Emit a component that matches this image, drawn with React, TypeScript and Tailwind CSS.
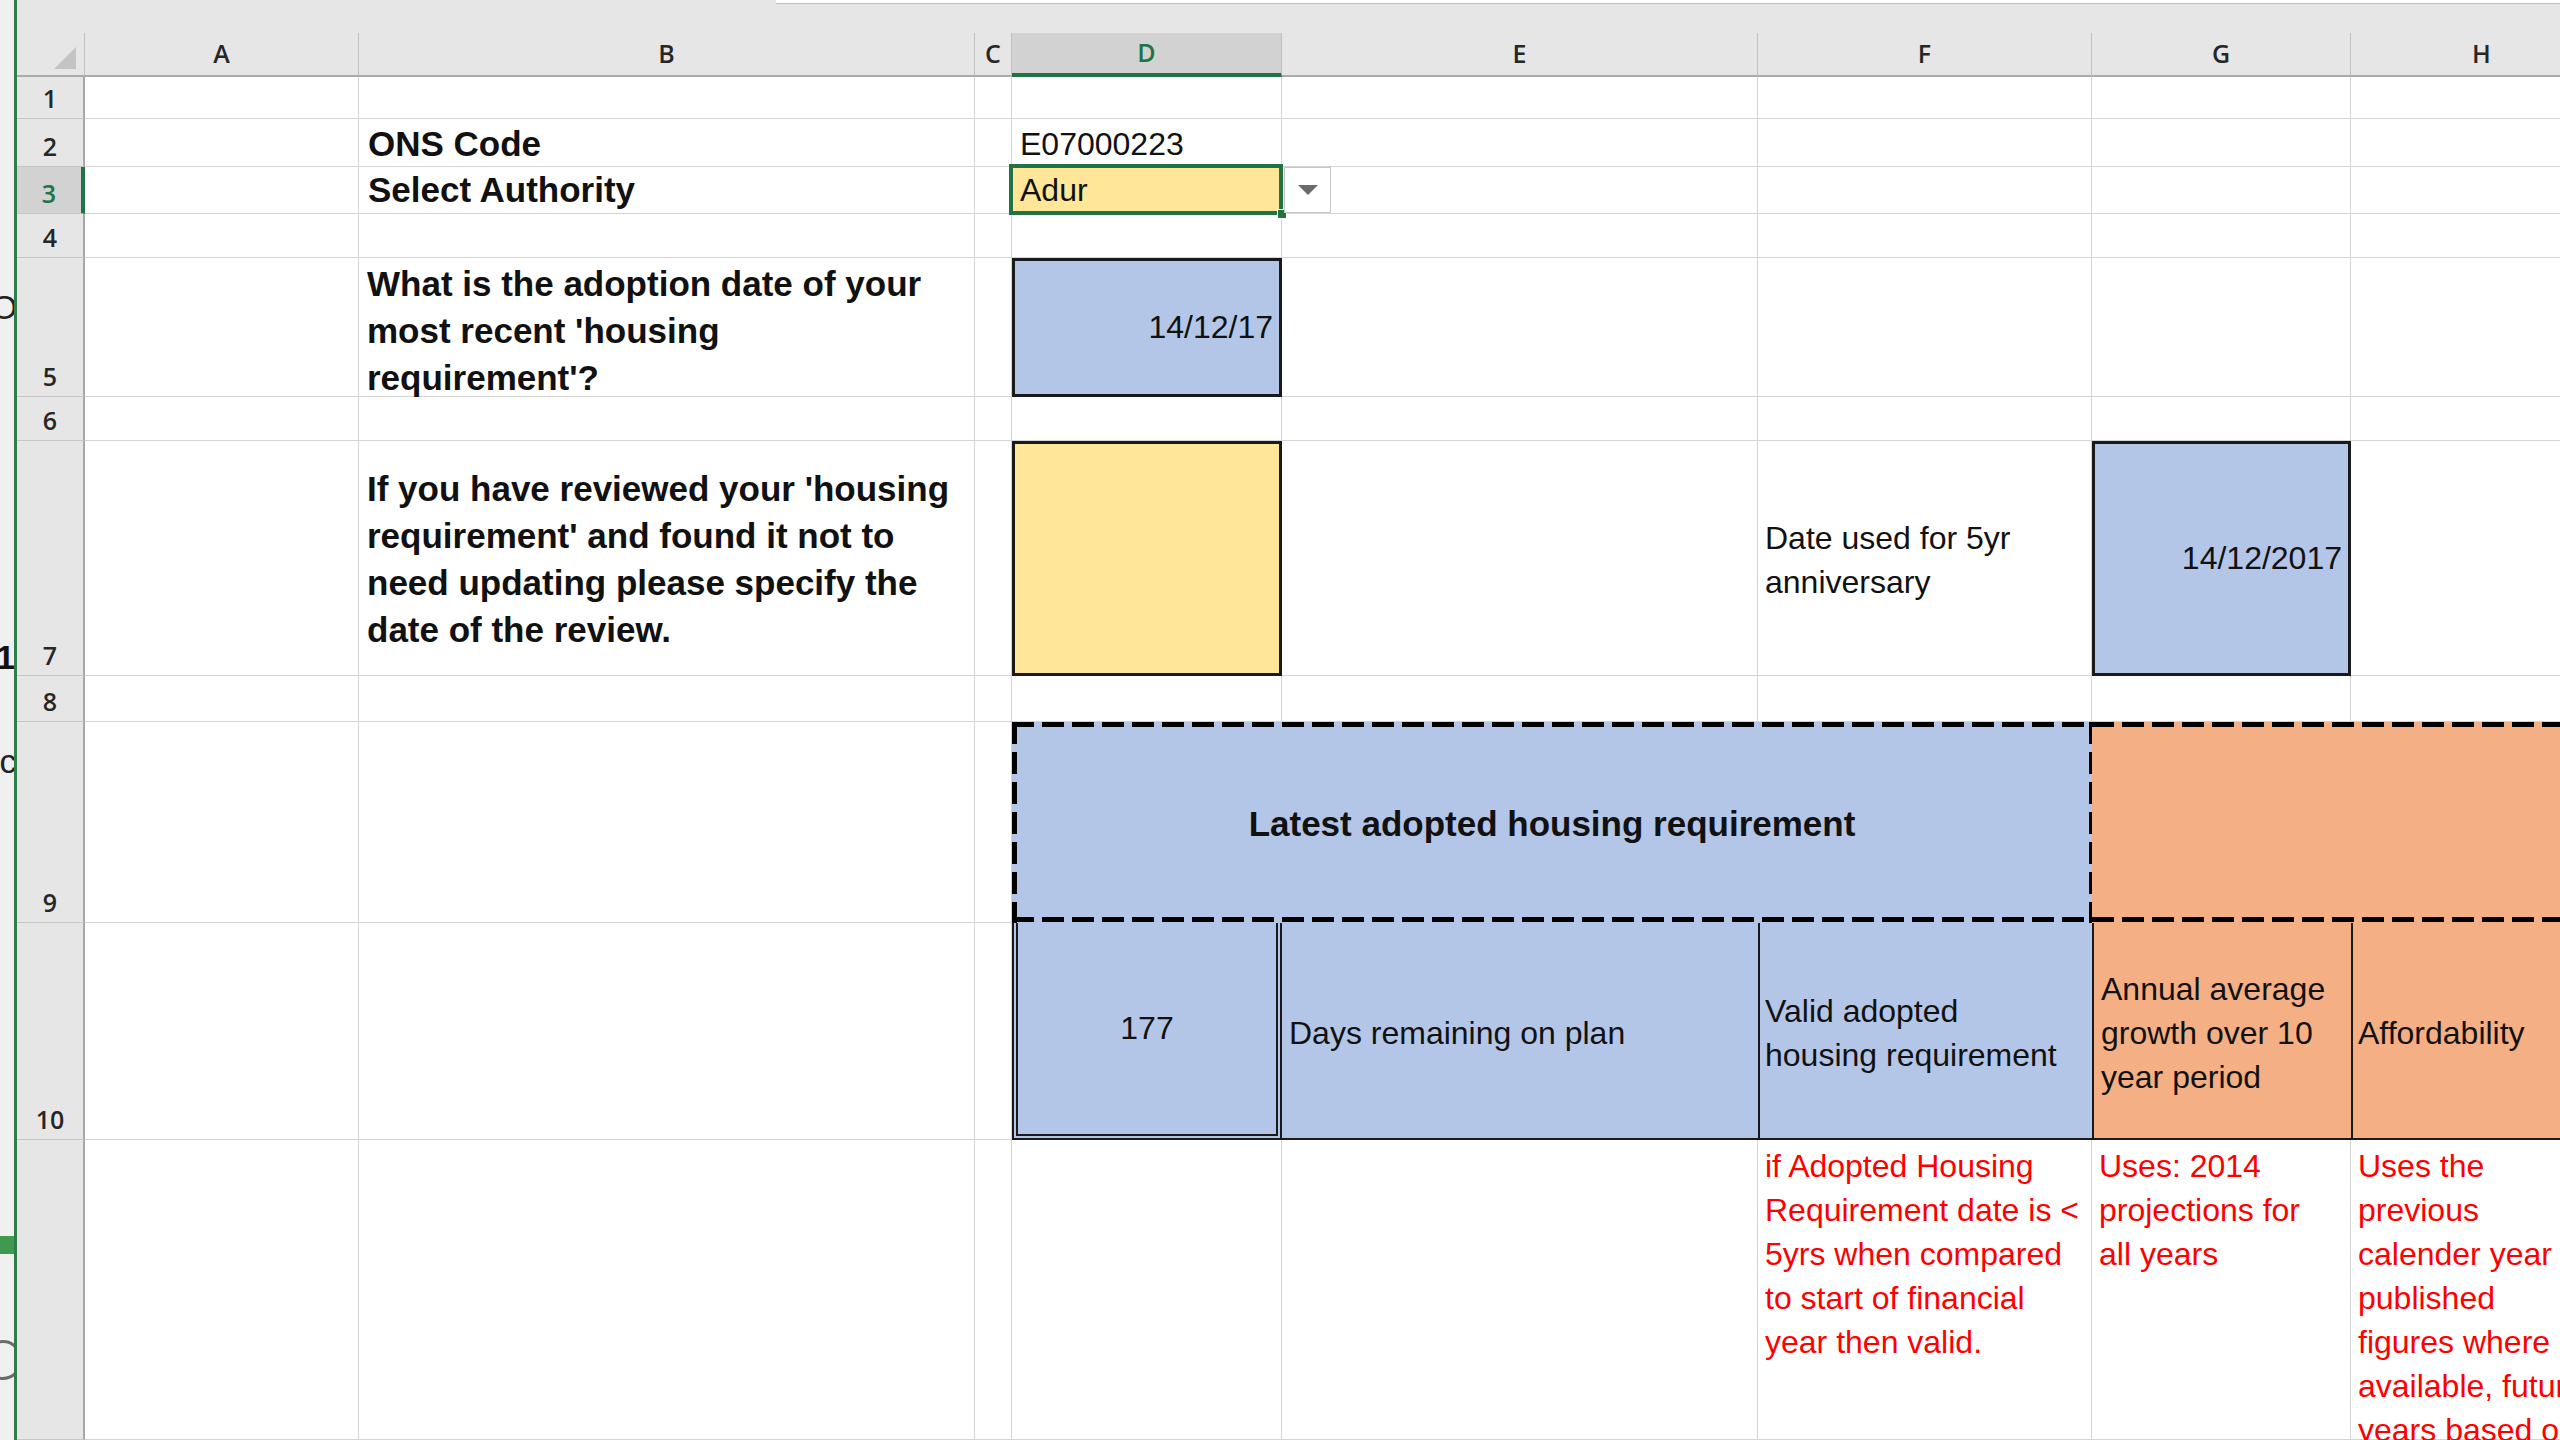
import React from "react";

const g = "border-r border-b border-[#d4d4d4]";
const dashTop =
  "absolute left-0 right-0 top-0 h-[5px] [background-image:repeating-linear-gradient(90deg,#000_0px,#000_22px,transparent_22px,transparent_30px)]";
const dashBottom =
  "absolute left-0 right-0 bottom-[1px] h-[5px] [background-image:repeating-linear-gradient(90deg,#000_0px,#000_22px,transparent_22px,transparent_30px)]";
const dashLeft =
  "absolute top-0 bottom-0 left-0 w-[5px] [background-image:repeating-linear-gradient(180deg,#000_0px,#000_22px,transparent_22px,transparent_30px)]";
const dashRight =
  "absolute top-0 bottom-0 right-[-2px] w-[5px] [background-image:repeating-linear-gradient(180deg,#000_0px,#000_22px,transparent_22px,transparent_30px)]";

function RowHead({ n, sel }: { n?: string; sel?: boolean }) {
  return (
    <div
      className={
        sel
          ? "flex items-end justify-center pb-[3px] bg-[#d2d2d2] border-b border-b-[#c6c6c6] border-r-[4px] border-r-[#217346] text-[#217346] font-['Open_Sans',sans-serif] font-semibold text-[25px] leading-[34px]"
          : "flex items-end justify-center pb-[3px] bg-[#e6e6e6] border-b border-b-[#c6c6c6] border-r-2 border-r-[#a8a8a8] text-[#262626] font-['Open_Sans',sans-serif] font-semibold text-[25px] leading-[34px]"
      }
    >
      {n}
    </div>
  );
}

function E() {
  return <div className={g} />;
}

function ColHead({ l, w, sel }: { l: string; w: string; sel?: boolean }) {
  return (
    <div
      className={
        sel
          ? `${w} shrink-0 h-[44px] flex items-center justify-center bg-[#d2d2d2] border-r border-r-[#c0c0c0] border-b-[4px] border-b-[#217346] text-[#217346] font-['Open_Sans',sans-serif] font-semibold text-[25px]`
          : `${w} shrink-0 h-[44px] flex items-center justify-center border-r border-r-[#c0c0c0] border-b-2 border-b-[#ababab] text-[#262626] font-['Open_Sans',sans-serif] font-semibold text-[25px]`
      }
    >
      {l}
    </div>
  );
}

export default function App() {
  return (
    <div className="w-[2560px] h-[1440px] overflow-hidden bg-white flex font-['Liberation_Sans',Arial,sans-serif] text-[#111]">
      {/* window edge behind */}
      <div className="relative w-[14px] shrink-0 bg-[#f0f0f0] overflow-hidden">
        <span className="absolute left-[-9px] top-[290px] text-[34px] leading-none text-[#222]">O</span>
        <span className="absolute left-[-4px] top-[640px] text-[34px] leading-none font-bold text-[#111]">1</span>
        <span className="absolute left-[-8px] top-[744px] text-[34px] leading-none text-[#222]">ic</span>
        <div className="absolute left-0 top-[1236px] w-[14px] h-[18px] bg-[#3f9a4e]" />
        <div className="absolute left-[-16px] top-[1340px] w-[38px] h-[40px] rounded-full border-[3px] border-[#6a6a6a]" />
      </div>
      <div className="w-[3px] shrink-0 bg-[#2e7d4a]" />

      <div className="flex-1 min-w-0 overflow-hidden flex flex-col">
        {/* top strip (formula bar edge) */}
        <div className="h-[4px] flex shrink-0 bg-[#e6e6e6]">
          <div className="w-[759px] shrink-0" />
          <div className="flex-1 bg-white border-b border-[#bdbdbd]" />
        </div>

        {/* column headers */}
        <div className="h-[73px] shrink-0 bg-[#e6e6e6] flex items-end">
          <div className="w-[68px] shrink-0 h-[44px] relative border-r border-r-[#c0c0c0] border-b-2 border-b-[#ababab]">
            <svg className="absolute right-[8px] bottom-[6px]" width="22" height="22" viewBox="0 0 22 22">
              <path d="M22 0 V22 H0 Z" fill="#c4c4c4" />
            </svg>
          </div>
          <ColHead l="A" w="w-[274px]" />
          <ColHead l="B" w="w-[616px]" />
          <ColHead l="C" w="w-[37px]" />
          <ColHead l="D" w="w-[270px]" sel />
          <ColHead l="E" w="w-[476px]" />
          <ColHead l="F" w="w-[334px]" />
          <ColHead l="G" w="w-[259px]" />
          <ColHead l="H" w="w-[262px]" />
          <ColHead l="I" w="w-[300px]" />
        </div>

        {/* sheet grid */}
        <div className="grid w-[2896px] grid-cols-[68px_274px_616px_37px_270px_476px_334px_259px_262px_300px] grid-rows-[42px_48px_47px_44px_139px_44px_235px_46px_201px_217px_300px]">
          {/* Row 1 */}
          <RowHead n="1" />
          <E /><E /><E /><E /><E /><E /><E /><E /><E />

          {/* Row 2 */}
          <RowHead n="2" />
          <E />
          <div className={`${g} flex items-end pl-[9px] pb-[2px] text-[35px] font-bold leading-[40px] whitespace-nowrap`}>ONS Code</div>
          <E />
          <div className={`${g} flex items-end pl-[8px] pb-[3px] text-[32px] leading-[37px] whitespace-nowrap`}>E07000223</div>
          <E /><E /><E /><E /><E />

          {/* Row 3 */}
          <RowHead n="3" sel />
          <E />
          <div className={`${g} flex items-end pl-[9px] pb-[3px] text-[35px] font-bold leading-[40px] whitespace-nowrap`}>Select Authority</div>
          <E />
          <div className={`${g} relative z-10`}>
            <div className="absolute inset-0 bg-[#ffe699] flex items-end pl-[8px] pb-[4px] text-[32px] leading-[37px]">Adur</div>
            <div className="absolute left-[-3px] top-[-3px] right-[-2px] bottom-[-2px] border-[4px] border-[#217346]" />
            <div className="absolute right-[-6px] bottom-[-6px] w-[10px] h-[10px] bg-[#217346] border border-white" />
            <div className="absolute left-[272px] top-[0px] w-[47px] h-[46px] bg-white border border-[#c6c6c6] flex items-center justify-center">
              <svg width="20" height="10" viewBox="0 0 20 10">
                <path d="M0 0 H20 L10 10 Z" fill="#6b6b6b" />
              </svg>
            </div>
          </div>
          <E /><E /><E /><E /><E />

          {/* Row 4 */}
          <RowHead n="4" />
          <E /><E /><E /><E /><E /><E /><E /><E /><E />

          {/* Row 5 */}
          <RowHead n="5" />
          <E />
          <div className={`${g} flex items-center pl-[8px] pt-[7px] text-[35px] font-bold leading-[47px] whitespace-nowrap`}>
            <div>
              What is the adoption date of your
              <br />
              most recent 'housing
              <br />
              requirement'?
            </div>
          </div>
          <E />
          <div className="border-[3px] border-[#1a1a1a] bg-[#b4c6e7] flex items-center justify-end pr-[6px] text-[32px] leading-[37px]">14/12/17</div>
          <E /><E /><E /><E /><E />

          {/* Row 6 */}
          <RowHead n="6" />
          <E /><E /><E /><E /><E /><E /><E /><E /><E />

          {/* Row 7 */}
          <RowHead n="7" />
          <E />
          <div className={`${g} flex items-center pl-[8px] pt-[2px] text-[35px] font-bold leading-[47px] whitespace-nowrap`}>
            <div>
              If you have reviewed your 'housing
              <br />
              requirement' and found it not to
              <br />
              need updating please specify the
              <br />
              date of the review.
            </div>
          </div>
          <E />
          <div className="border-[3px] border-[#1a1a1a] bg-[#ffe699]" />
          <E />
          <div className={`${g} flex items-center pl-[7px] pt-[4px] text-[32px] leading-[44px] whitespace-nowrap`}>
            <div>
              Date used for 5yr
              <br />
              anniversary
            </div>
          </div>
          <div className="border-[3px] border-[#1a1a1a] bg-[#b4c6e7] flex items-center justify-end pr-[6px] text-[32px] leading-[37px]">14/12/2017</div>
          <E /><E />

          {/* Row 8 */}
          <RowHead n="8" />
          <E /><E /><E /><E /><E /><E /><E /><E /><E />

          {/* Row 9 */}
          <RowHead n="9" />
          <E /><E /><E />
          <div className="col-span-3 relative bg-[#b4c6e7] flex items-center justify-center text-[35px] font-bold leading-[40px] whitespace-nowrap">
            <span className="pt-[2px]">Latest adopted housing requirement</span>
            <div className={dashTop} />
            <div className={dashBottom} />
            <div className={dashLeft} />
            <div className={dashRight} />
          </div>
          <div className="col-span-3 relative bg-[#f4b084]">
            <div className={dashTop} />
            <div className={dashBottom} />
          </div>

          {/* Row 10 */}
          <RowHead n="10" />
          <E /><E /><E />
          <div className="bg-[#b4c6e7] border-l-[6px] border-r-[6px] border-b-[6px] border-double border-[#1a1a1a] flex items-center justify-center text-[32px] leading-[37px]">177</div>
          <div className="bg-[#b4c6e7] border-b-2 border-b-[#1a1a1a] flex items-center pl-[7px] pt-[4px] text-[32px] leading-[44px] whitespace-nowrap">Days remaining on plan</div>
          <div className="bg-[#b4c6e7] border-l-2 border-b-2 border-[#1a1a1a] flex items-center pl-[5px] pt-[4px] text-[32px] leading-[44px] whitespace-nowrap">
            <div>
              Valid adopted
              <br />
              housing requirement
            </div>
          </div>
          <div className="bg-[#f4b084] border-l-2 border-b-2 border-[#1a1a1a] flex items-center pl-[7px] pt-[4px] text-[32px] leading-[44px] whitespace-nowrap">
            <div>
              Annual average
              <br />
              growth over 10
              <br />
              year period
            </div>
          </div>
          <div className="bg-[#f4b084] border-l-2 border-b-2 border-[#1a1a1a] flex items-center pl-[5px] pt-[4px] text-[32px] leading-[44px] whitespace-nowrap">Affordability</div>
          <div className="bg-[#f4b084] border-l-2 border-b-2 border-[#1a1a1a]" />

          {/* Row 11 */}
          <RowHead />
          <E /><E /><E /><E /><E />
          <div className={`${g} pl-[7px] pt-[4px] text-[32px] leading-[44px] text-[#ff0000] whitespace-nowrap`}>
            if Adopted Housing
            <br />
            Requirement date is &lt;
            <br />
            5yrs when compared
            <br />
            to start of financial
            <br />
            year then valid.
          </div>
          <div className={`${g} pl-[7px] pt-[4px] text-[32px] leading-[44px] text-[#ff0000] whitespace-nowrap`}>
            Uses: 2014
            <br />
            projections for
            <br />
            all years
          </div>
          <div className={`${g} pl-[7px] pt-[4px] text-[32px] leading-[44px] text-[#ff0000] whitespace-nowrap`}>
            Uses the
            <br />
            previous
            <br />
            calender year
            <br />
            published
            <br />
            figures where
            <br />
            available, future
            <br />
            years based on
          </div>
          <E />
        </div>
      </div>
    </div>
  );
}
